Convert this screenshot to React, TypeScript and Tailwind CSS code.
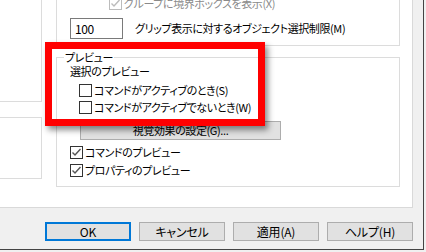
import React from 'react';

const font = "font-['Noto_Sans_CJK_JP','Noto_Sans',sans-serif] [font-feature-settings:'palt']";

const Check: React.FC<{ checked?: boolean; disabled?: boolean }> = ({ checked, disabled }) => (
  <span
    className={`inline-flex h-[13px] w-[13px] shrink-0 items-center justify-center border bg-white ${
      disabled ? 'border-[#bcbcbc]' : 'border-[#333333]'
    }`}
  >
    {checked && (
      <svg width="11" height="11" viewBox="0 0 11 11">
        <path
          d="M1.5 5.5 L4 8 L9.5 2"
          fill="none"
          stroke={disabled ? '#bcbcbc' : '#555555'}
          strokeWidth="1.4"
        />
      </svg>
    )}
  </span>
);

const CheckRow: React.FC<{ label: string; checked?: boolean; disabled?: boolean; className?: string }> = ({
  label,
  checked,
  disabled,
  className = '',
}) => (
  <div className={`flex h-[13px] items-center gap-[2px] ${className}`}>
    <Check checked={checked} disabled={disabled} />
    <span className={`leading-[13px] ${disabled ? 'text-[#8a8a8a]' : 'text-black'}`}>{label}</span>
  </div>
);

const DlgButton: React.FC<{ label: string; focused?: boolean }> = ({ label, focused }) => (
  <button
    className={`flex h-[19px] w-[86px] items-center justify-center bg-[#e1e1e1] text-[12px] leading-none tracking-[-0.2px] text-black ${
      focused ? 'border-2 border-[#0078d7]' : 'border border-[#adadad]'
    }`}
  >
    {label}
  </button>
);

export default function App() {
  return (
    <div
      className={`relative h-[252px] w-[426px] overflow-hidden bg-[#f0f0f0] text-[11px] tracking-[-0.4px] text-black ${font}`}
    >
      <div className="flex h-[250px] w-[424px] flex-col border-r border-b border-[#444444] pr-[10px]">
        {/* tab page */}
        <div className="flex h-[208px] w-[413px] border-r border-b border-[#d9d9d9] bg-white">
          {/* left column */}
          <div className="flex w-[42px] flex-col">
            <div className="h-[102px] border-r border-b border-[#dcdcdc]" />
            <div className="mt-[15px] h-[62px] border-t border-r border-b border-[#dcdcdc]" />
          </div>

          {/* right column */}
          <div className="ml-[14px] flex w-[344px] flex-col">
            <div className="mt-[-10px] h-[56px] border-r border-b border-l border-[#dcdcdc]">
              <CheckRow
                label="グループに境界ボックスを表示(X)"
                checked
                disabled
                className="ml-[52px] mt-[7px]"
              />
              <div className="mt-[8px] flex items-center">
                <div className="ml-[13px] flex h-[21px] w-[53px] items-center border border-[#7a7a7a] pl-[4px] text-[12px]">
                  100
                </div>
                <span className="ml-[12px]">グリップ表示に対するオブジェクト選択制限(M)</span>
              </div>
            </div>

            <fieldset className="mt-[5px] h-[136px] border border-[#dcdcdc] px-[13px]">
              <legend className="ml-[-6px] px-[1px] leading-[12px]">プレビュー</legend>
              <div className="mt-[2px] leading-[13px]">選択のプレビュー</div>
              <CheckRow label="コマンドがアクティブのとき(S)" className="ml-[9px] mt-[6px]" />
              <CheckRow label="コマンドがアクティブでないとき(W)" className="ml-[9px] mt-[4px]" />
              <div className="ml-[10px] mt-[7px] flex h-[19px] w-[201px] items-center justify-center border border-[#adadad] bg-[#e1e1e1] leading-none">
                視覚効果の設定(G)...
              </div>
              <CheckRow label="コマンドのプレビュー" checked className="mt-[6px]" />
              <CheckRow label="プロパティのプレビュー" checked className="mt-[5px]" />
            </fieldset>
          </div>
        </div>

        {/* button bar */}
        <div className="mt-[14px] flex gap-[8px] pl-[45px]">
          <DlgButton label="OK" focused />
          <DlgButton label="キャンセル" />
          <DlgButton label="適用(A)" />
          <DlgButton label="ヘルプ(H)" />
        </div>
      </div>

      {/* red highlight */}
      <div className="absolute left-[45px] top-[42px] h-[84px] w-[220px] border-[7px] border-[#ff0000] shadow-[3px_4px_6px_rgba(0,0,0,0.45)]" />
    </div>
  );
}
